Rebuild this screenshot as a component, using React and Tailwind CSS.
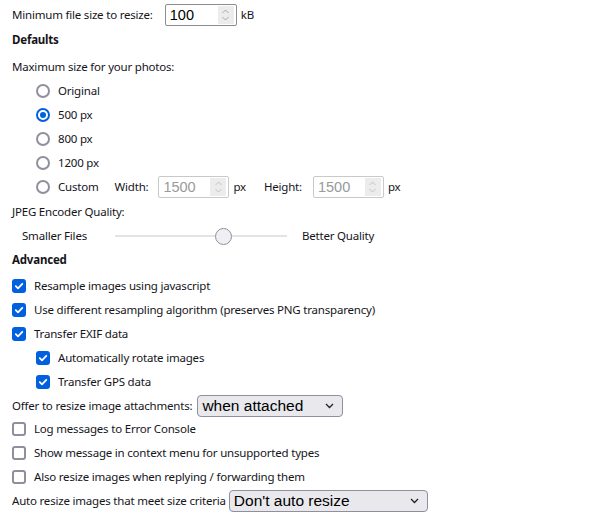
import React from 'react';

const Spinner = ({ disabled }) => (
  <div className="flex h-[18px] w-[16px] flex-col items-center justify-center bg-[#ececec]">
    <svg width="9" height="14" viewBox="0 0 9 14" fill="none" stroke={disabled ? '#c4c4c4' : '#a8a8a8'} strokeWidth="1">
      <path d="M1.5 5 L4.5 2 L7.5 5" />
      <path d="M1.5 9 L4.5 12 L7.5 9" />
    </svg>
  </div>
);

const NumberBox = ({ value, width, disabled }) => (
  <div className={`flex h-[22px] items-center justify-between rounded-[2px] border pl-[4px] pr-[2px] ${width} ${disabled ? 'border-[#c9c9c9]' : 'border-[#8d8d8d]'}`}>
    <span className={`font-['Liberation_Sans'] text-[14.5px] leading-none tracking-normal ${disabled ? 'text-[#9a9a9a]' : 'text-black'}`}>{value}</span>
    <Spinner disabled={disabled} />
  </div>
);

const Radio = ({ checked, label }) => (
  <div className="flex h-[24px] items-center gap-[8px] pl-[36px]">
    <span className={`flex h-[14px] w-[14px] items-center justify-center rounded-full border-2 ${checked ? 'border-[#0060df]' : 'border-[#8f8f9d]'}`}>
      {checked && <span className="h-[6px] w-[6px] rounded-full bg-[#0060df]" />}
    </span>
    <span>{label}</span>
  </div>
);

const Check = ({ checked, label, indent }) => (
  <div className={`flex h-[24px] items-center gap-[8px] ${indent ? 'pl-[36px]' : 'pl-[12px]'}`}>
    {checked ? (
      <span className="flex h-[14px] w-[14px] items-center justify-center rounded-[3px] bg-[#0060df]">
        <svg width="10" height="10" viewBox="0 0 10 10" fill="none" stroke="white" strokeWidth="1.8" strokeLinecap="round" strokeLinejoin="round">
          <path d="M1.8 5.2 L4 7.4 L8.3 2.8" />
        </svg>
      </span>
    ) : (
      <span className="h-[14px] w-[14px] rounded-[3px] border-2 border-[#8f8f9d]" />
    )}
    <span>{label}</span>
  </div>
);

const Select = ({ value, width }) => (
  <div className={`flex h-[22px] items-center justify-between rounded-[4px] border border-[#8f8f9d] bg-[#e9e9ed] pl-[4px] pr-[8px] ${width}`}>
    <span className="font-['Liberation_Sans'] text-[15.5px] leading-none tracking-normal text-black">{value}</span>
    <svg width="9" height="6" viewBox="0 0 9 6" fill="none" stroke="#222" strokeWidth="1.3">
      <path d="M1 1 L4.5 4.5 L8 1" />
    </svg>
  </div>
);

export default function App() {
  return (
    <div className="h-[516px] w-[597px] bg-white pt-[4px] font-['Noto_Sans',sans-serif] text-[11.5px] tracking-[-0.2px] text-[#15141a]">
      <div className="flex h-[22px] items-center pl-[12px]">
        <span>Minimum file size to resize:</span>
        <div className="ml-[12px]">
          <NumberBox value="100" width="w-[72px]" />
        </div>
        <span className="ml-[4px]">kB</span>
      </div>
      <div className="flex h-[28px] items-center pl-[12px] font-bold">Defaults</div>
      <div className="flex h-[25px] items-center pl-[12px]">Maximum size for your photos:</div>
      <Radio label="Original" />
      <Radio label="500 px" checked />
      <Radio label="800 px" />
      <Radio label="1200 px" />
      <div className="flex items-center">
        <Radio label="Custom" />
        <span className="ml-[16px]">Width:</span>
        <div className="ml-[10px]">
          <NumberBox value="1500" width="w-[71px]" disabled />
        </div>
        <span className="ml-[4px]">px</span>
        <span className="ml-[18px]">Height:</span>
        <div className="ml-[11px]">
          <NumberBox value="1500" width="w-[71px]" disabled />
        </div>
        <span className="ml-[4px]">px</span>
      </div>
      <div className="flex h-[25px] items-center pl-[12px]">JPEG Encoder Quality:</div>
      <div className="flex h-[24px] items-center pl-[22px]">
        <span className="w-[93px]">Smaller Files</span>
        <div className="relative h-[16px] w-[172px]">
          <div className="absolute left-0 right-0 top-[7px] h-[2px] bg-[#e3e3e3]" />
          <div className="absolute left-[100px] top-0 h-[17px] w-[17px] rounded-full border border-[#8f8f9d] bg-[#f0f0f4]" />
        </div>
        <span className="ml-[15px]">Better Quality</span>
      </div>
      <div className="flex h-[24px] items-center pl-[12px] font-bold">Advanced</div>
      <div className="mt-[2px]">
        <Check checked label="Resample images using javascript" />
        <Check checked label="Use different resampling algorithm (preserves PNG transparency)" />
        <Check checked label="Transfer EXIF data" />
        <Check checked indent label="Automatically rotate images" />
        <Check checked indent label="Transfer GPS data" />
      </div>
      <div className="flex h-[23px] items-center pl-[12px]">
        <span>Offer to resize image attachments:</span>
        <div className="ml-[5px]">
          <Select value="when attached" width="w-[146px]" />
        </div>
      </div>
      <Check label="Log messages to Error Console" />
      <Check label="Show message in context menu for unsupported types" />
      <Check label="Also resize images when replying / forwarding them" />
      <div className="flex h-[23px] items-center pl-[12px]">
        <span>Auto resize images that meet size criteria</span>
        <div className="ml-[3px]">
          <Select value="Don't auto resize" width="w-[199px]" />
        </div>
      </div>
    </div>
  );
}
